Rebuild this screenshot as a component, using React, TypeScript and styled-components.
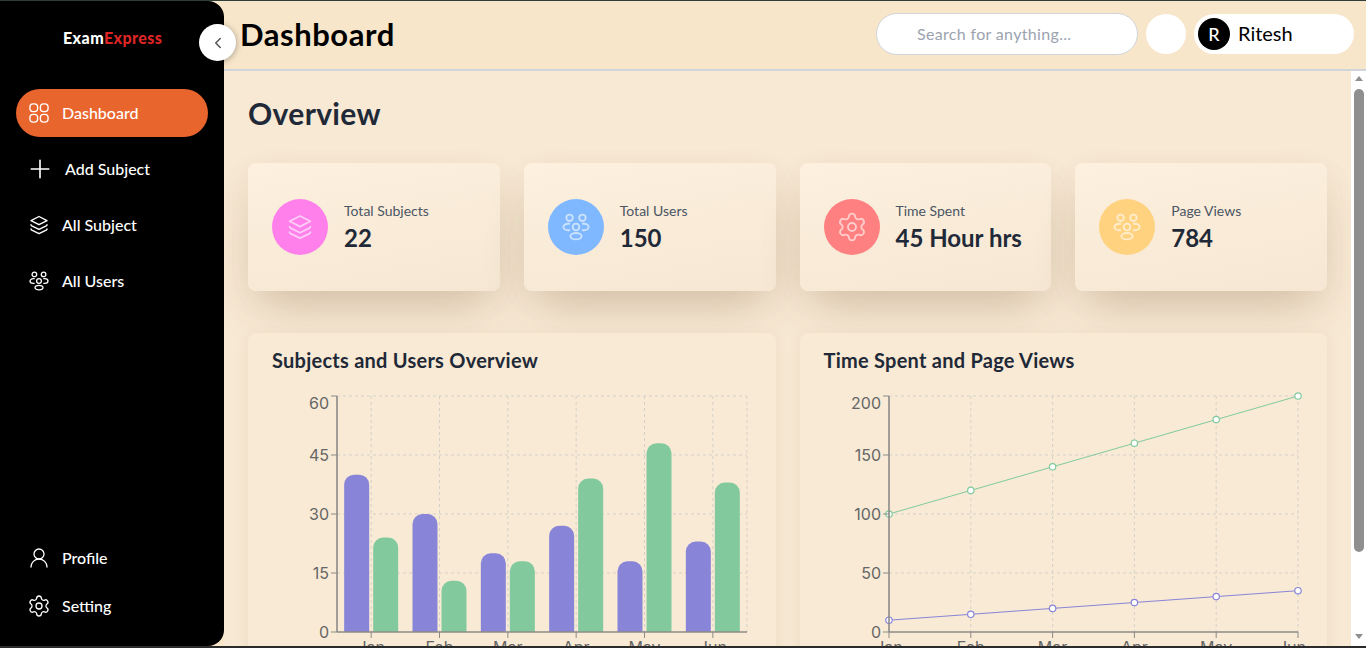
import React from "react";
import styled, { createGlobalStyle } from "styled-components";
import { ChevronLeft, Plus, Settings, UserRound } from "lucide-react";

const sans = `"Lato", "Noto Sans", sans-serif`;
const tickFont = `"Inter", "Noto Sans", sans-serif`;

const GridIcon = ({ size = 20 }: { size?: number }) => (
  <svg width={size} height={size} viewBox="0 0 22 22" fill="none" stroke="currentColor" strokeWidth="1.5">
    <rect x="1" y="1" width="8.5" height="8.5" rx="3.6" />
    <rect x="12.5" y="1" width="8.5" height="8.5" rx="3.6" />
    <rect x="1" y="12.5" width="8.5" height="8.5" rx="3.6" />
    <rect x="12.5" y="12.5" width="8.5" height="8.5" rx="3.6" />
  </svg>
);

const StackIcon = ({ size = 20 }: { size?: number }) => (
  <svg width={size} height={size} viewBox="0 0 20 20" fill="none" stroke="currentColor" strokeWidth="1.4" strokeLinejoin="round" strokeLinecap="round">
    <path d="M10 1.5 18 5.6 10 9.7 2 5.6Z" />
    <path d="M2 9.8c0 .5.3.8.8 1.1L10 14.4l7.2-3.5c.5-.3.8-.6.8-1.1" />
    <path d="M2 14c0 .5.3.8.8 1.1L10 18.6l7.2-3.5c.5-.3.8-.6.8-1.1" />
  </svg>
);

const GroupIcon = ({ size = 20 }: { size?: number }) => (
  <svg width={size} height={size} viewBox="0 0 20 20" fill="none" stroke="currentColor" strokeWidth="1.3" strokeLinecap="round">
    <circle cx="5.4" cy="3.4" r="2.3" />
    <circle cx="14.6" cy="3.4" r="2.3" />
    <circle cx="10" cy="10" r="2.4" />
    <ellipse cx="10" cy="16.6" rx="4" ry="2.3" />
    <path d="M5.2 7.7H4.2C2.4 7.7 1 8.8 1 10s1.400 2.300 3.200 2.300h1" />
    <path d="M14.800 7.700h1C17.600 7.700 19 8.800 19 10s-1.400 2.300-3.200 2.300h-1" />
  </svg>
);

const navTop = [
  { label: "Dashboard", icon: <GridIcon />, active: true },
  { label: "Add Subject", icon: <Plus size={30} strokeWidth={1.3} />, wide: true },
  { label: "All Subject", icon: <StackIcon /> },
  { label: "All Users", icon: <GroupIcon /> },
];

const stats = [
  { label: "Total Subjects", value: "22", color: "#ff80eb", icon: <StackIcon size={26} /> },
  { label: "Total Users", value: "150", color: "#80b8ff", icon: <GroupIcon size={28} /> },
  { label: "Time Spent", value: "45 Hour hrs", color: "#ff8080", icon: <Settings size={32} strokeWidth={1.4} /> },
  { label: "Page Views", value: "784", color: "#ffd280", icon: <GroupIcon size={28} /> },
];

const months = ["Jan", "Feb", "Mar", "Apr", "May", "Jun"];
const subjects = [40, 30, 20, 27, 18, 23];
const users = [24, 13, 18, 39, 48, 38];
const hours = [100, 120, 140, 160, 180, 200];
const views = [10, 15, 20, 25, 30, 35];

const GRID = "#d4d1ca";
const AXIS = "#8c8a86";
const TICK = "#666666";
const PURPLE = "#8884d8";
const GREEN = "#82ca9d";

const chartTop = 7;
const chartBottom = 243;
const chartHeight = chartBottom - chartTop;

// axes, ticks and dashed grid shared by both charts
const ChartFrame = ({
  left,
  right,
  yTicks,
  xs,
  xLines,
  labelShift = 0,
  children,
}: {
  left: number;
  right: number;
  yTicks: number[];
  xs: number[];
  xLines: number[];
  labelShift?: number;
  children: React.ReactNode;
}) => {
  const max = yTicks[yTicks.length - 1];
  const yOf = (v: number) => chartBottom - (v / max) * chartHeight;
  return (
    <svg width="100%" height="280" style={{ display: "block", overflow: "visible" }}>
      <g stroke={GRID} strokeDasharray="3 3">
        {yTicks.slice(1).map((t) => (
          <line key={t} x1={left} x2={right} y1={yOf(t)} y2={yOf(t)} />
        ))}
        {xLines.map((x) => (
          <line key={x} x1={x} x2={x} y1={chartTop} y2={chartBottom} />
        ))}
      </g>
      {children}
      <g stroke={AXIS}>
        <line x1={left} x2={left} y1={chartTop} y2={chartBottom} strokeWidth="1.6" />
        <line x1={left} x2={right} y1={chartBottom} y2={chartBottom} strokeWidth="1.6" />
        {yTicks.map((t) => (
          <line key={t} x1={left - 6} x2={left} y1={yOf(t)} y2={yOf(t)} />
        ))}
        {xs.map((x) => (
          <line key={x} x1={x} x2={x} y1={chartBottom} y2={chartBottom + 6} />
        ))}
      </g>
      <g fill={TICK} fontFamily={tickFont} fontSize="16">
        {yTicks.map((t) => (
          <text key={t} x={left - 8} y={yOf(t) + (t === max ? 13 : 6)} textAnchor="end">
            {t}
          </text>
        ))}
        {xs.map((x, i) => (
          <text key={x} x={i === 5 ? x - labelShift : x} y={chartBottom + 21} textAnchor="middle">
            {months[i]}
          </text>
        ))}
      </g>
    </svg>
  );
};

const BarsChart = () => {
  const left = 65;
  const right = 475;
  const band = (right - left) / 6;
  const xs = months.map((_, i) => left + band * (i + 0.5));
  const h = (v: number) => (v / 60) * chartHeight;
  const bar = (x: number, v: number, fill: string) => {
    const y = chartBottom - h(v);
    const w = 25;
    const r = 10;
    return (
      <path
        key={`${x}-${v}`}
        fill={fill}
        d={`M${x} ${chartBottom}V${y + r}A${r} ${r} 0 0 1 ${x + r} ${y}H${x + w - r}A${r} ${r} 0 0 1 ${x + w} ${y + r}V${chartBottom}Z`}
      />
    );
  };
  return (
    <ChartFrame left={left} right={right} yTicks={[0, 15, 30, 45, 60]} xs={xs} xLines={[...xs, right]}>
      {months.map((_, i) => (
        <g key={i}>
          {bar(xs[i] - 27, subjects[i], PURPLE)}
          {bar(xs[i] + 2, users[i], GREEN)}
        </g>
      ))}
    </ChartFrame>
  );
};

const LinesChart = () => {
  const left = 65;
  const right = 474;
  const step = (right - left) / 5;
  const xs = months.map((_, i) => left + step * i);
  const yOf = (v: number) => chartBottom - (v / 200) * chartHeight;
  const line = (data: number[], color: string) => (
    <g>
      <polyline fill="none" stroke={color} points={data.map((v, i) => `${xs[i]},${yOf(v)}`).join(" ")} />
      {data.map((v, i) => (
        <circle key={i} cx={xs[i]} cy={yOf(v)} r="3.2" fill="#fff" stroke={color} strokeWidth="1.2" />
      ))}
    </g>
  );
  return (
    <ChartFrame left={left} right={right} yTicks={[0, 50, 100, 150, 200]} xs={xs} xLines={xs.slice(1)} labelShift={6}>
      {line(hours, GREEN)}
      {line(views, PURPLE)}
    </ChartFrame>
  );
};

const App = () => (
  <>
    <GlobalStyle />
    <Frame>
      <Sidebar>
        <Logo>
          Exam<span>Express</span>
        </Logo>
        <CollapseButton>
          <ChevronLeft size={18} strokeWidth={2} />
        </CollapseButton>
        <Nav>
          {navTop.map((item) => (
            <NavItem key={item.label} $active={item.active} $wide={item.wide}>
              <NavIcon $wide={item.wide}>{item.icon}</NavIcon>
              {item.label}
            </NavItem>
          ))}
        </Nav>
        <BottomNav>
          <NavItem>
            <NavIcon>
              <UserRound size={24} strokeWidth={1.3} />
            </NavIcon>
            Profile
          </NavItem>
          <NavItem>
            <NavIcon>
              <Settings size={24} strokeWidth={1.3} />
            </NavIcon>
            Setting
          </NavItem>
        </BottomNav>
      </Sidebar>
      <Column>
        <Header>
          <PageTitle>Dashboard</PageTitle>
          <HeaderRight>
            <SearchBox placeholder="Search for anything..." readOnly />
            <RoundButton />
            <UserChip>
              <Avatar>R</Avatar>
              <UserName>Ritesh</UserName>
            </UserChip>
          </HeaderRight>
        </Header>
        <Body>
          <Main>
            <Heading>Overview</Heading>
            <StatsGrid>
              {stats.map((s) => (
                <StatCard key={s.label}>
                  <StatIcon $color={s.color}>{s.icon}</StatIcon>
                  <StatText>
                    <StatLabel>{s.label}</StatLabel>
                    <StatValue>{s.value}</StatValue>
                  </StatText>
                </StatCard>
              ))}
            </StatsGrid>
            <ChartsGrid>
              <ChartCard>
                <ChartTitle>Subjects and Users Overview</ChartTitle>
                <BarsChart />
              </ChartCard>
              <ChartCard>
                <ChartTitle>Time Spent and Page Views</ChartTitle>
                <LinesChart />
              </ChartCard>
            </ChartsGrid>
          </Main>
          <ScrollTrack>
            <ScrollArrow $dir="up" />
            <ScrollThumb />
            <ScrollArrow $dir="down" />
          </ScrollTrack>
        </Body>
      </Column>
    </Frame>
  </>
);

export default App;

const GlobalStyle = createGlobalStyle`
  * {
    box-sizing: border-box;
  }
  html, body {
    margin: 0;
    height: 100%;
    overflow: hidden;
    font-family: ${sans};
  }
`;

const Frame = styled.div`
  display: flex;
  height: 648px;
  border-top: 1px solid #2f3e3a;
  border-bottom: 2px solid #2b2b2b;
  background: #f7e6ca;
`;

const Sidebar = styled.aside`
  position: relative;
  flex: 0 0 224px;
  display: flex;
  flex-direction: column;
  background: #000;
  border-radius: 0 16px 16px 0;
  z-index: 2;
`;

const Logo = styled.div`
  margin: 27px 0 0;
  padding-left: 63px;
  font-size: 16px;
  line-height: 19px;
  font-weight: 900;
  letter-spacing: 0.42px;
  color: #fff;

  span {
    color: #dc2626;
  }
`;

const CollapseButton = styled.button`
  position: absolute;
  top: 23px;
  right: -12px;
  width: 37px;
  height: 37px;
  display: flex;
  align-items: center;
  justify-content: center;
  padding: 0;
  border: none;
  border-radius: 50%;
  background: #fff;
  color: #555;
  box-shadow: 0 1px 6px rgba(0, 0, 0, 0.35);
`;

const Nav = styled.nav`
  display: flex;
  flex-direction: column;
  gap: 8px;
  margin-top: 42px;
  padding: 0 16px;
`;

const BottomNav = styled.nav`
  display: flex;
  flex-direction: column;
  margin-top: auto;
  padding: 0 16px 16px;
`;

const NavItem = styled.a<{ $active?: boolean; $wide?: boolean }>`
  display: flex;
  align-items: center;
  gap: ${(p) => (p.$wide ? "14px" : "12px")};
  height: 48px;
  padding: 0 0 1px 12px;
  border-radius: 24px;
  background: ${(p) => (p.$active ? "#e9652e" : "transparent")};
  color: #fff;
  font-size: 16px;
  font-weight: 500;
`;

const NavIcon = styled.span<{ $wide?: boolean }>`
  display: flex;
  align-items: center;
  justify-content: center;
  width: 22px;
  flex: none;
  margin: ${(p) => (p.$wide ? "1px 0 0 1px" : "1px 0 0")};

  svg {
    flex: none;
  }
`;

const Column = styled.div`
  flex: 1;
  min-width: 0;
  display: flex;
  flex-direction: column;
`;

const Header = styled.header`
  flex: 0 0 70px;
  display: flex;
  align-items: center;
  justify-content: space-between;
  padding: 0 12px 2px 16px;
  background: #f7e6ca;
  border-bottom: 2px solid #d1d5db;
`;

const PageTitle = styled.h1`
  margin: 0;
  font-size: 31px;
  letter-spacing: 0.55px;
  font-weight: 700;
  color: #000;
`;

const HeaderRight = styled.div`
  display: flex;
  align-items: center;
  gap: 8px;
`;

const SearchBox = styled.input`
  width: 262px;
  height: 42px;
  padding: 0 16px 2px 40px;
  border: 1px solid #d1d5db;
  border-radius: 21px;
  background: #fff;
  font-family: ${sans};
  font-size: 16px;
  letter-spacing: 0.33px;
  outline: none;

  &::placeholder {
    color: #9ca3af;
  }
`;

const RoundButton = styled.div`
  width: 40px;
  height: 40px;
  border-radius: 50%;
  background: #fff;
`;

const UserChip = styled.div`
  display: flex;
  align-items: center;
  gap: 8px;
  width: 160px;
  height: 40px;
  padding-left: 4px;
  border-radius: 20px;
  background: #fff;
  color: #000;
  font-size: 20px;
`;

const UserName = styled.span`
  padding-bottom: 3px;
`;

const Avatar = styled.span`
  width: 32px;
  height: 32px;
  display: flex;
  align-items: center;
  justify-content: center;
  border-radius: 50%;
  background: #000;
  color: #fff;
  font-size: 18px;
  font-weight: 500;
`;

const Body = styled.div`
  flex: 1;
  min-height: 0;
  display: flex;
`;

const Main = styled.main`
  flex: 1;
  min-width: 0;
  overflow: hidden;
  padding: 24px;
  background: #f8e9d4;
`;

const ScrollTrack = styled.div`
  flex: 0 0 15px;
  display: flex;
  flex-direction: column;
  align-items: center;
  padding: 5px 0 7px;
  background: #fff;
`;

const ScrollArrow = styled.div<{ $dir: "up" | "down" }>`
  flex: none;
  width: 0;
  height: 0;
  margin-top: ${(p) => (p.$dir === "down" ? "auto" : "0")};
  border-left: 4.5px solid transparent;
  border-right: 4.5px solid transparent;
  border-bottom: ${(p) => (p.$dir === "up" ? "5px solid #8f8f8f" : "none")};
  border-top: ${(p) => (p.$dir === "down" ? "5px solid #8f8f8f" : "none")};
`;

const ScrollThumb = styled.div`
  flex: none;
  width: 10px;
  height: 463px;
  margin-top: 8px;
  border-radius: 5px;
  background: #8f8f8f;
`;

const Heading = styled.h2`
  margin: 0 0 32px;
  font-size: 30px;
  line-height: 36px;
  letter-spacing: 0.35px;
  font-weight: 700;
  color: #1f2937;
`;

const StatsGrid = styled.div`
  display: grid;
  grid-template-columns: repeat(4, 1fr);
  gap: 24px;
  margin-bottom: 42px;
`;

const StatCard = styled.div`
  display: flex;
  align-items: center;
  gap: 16px;
  height: 128px;
  padding: 0 24px;
  border-radius: 8px;
  background: linear-gradient(170deg, #fdf0de 0%, #f5e7d3 100%);
  box-shadow: 0 25px 50px -12px rgba(90, 60, 20, 0.22), 0 8px 32px rgba(90, 60, 20, 0.05);
`;

const StatIcon = styled.div<{ $color: string }>`
  flex: none;
  width: 56px;
  height: 56px;
  display: flex;
  align-items: center;
  justify-content: center;
  border-radius: 50%;
  background: ${(p) => p.$color};
  color: rgba(255, 255, 255, 0.6);
`;

const StatText = styled.div`
  padding-top: 2px;
`;

const StatLabel = styled.div`
  font-size: 14px;
  line-height: 20px;
  color: #4b5563;
`;

const StatValue = styled.div`
  font-size: 24px;
  line-height: 34px;
  font-weight: 700;
  color: #1f2937;
`;

const ChartsGrid = styled.div`
  display: grid;
  grid-template-columns: repeat(2, 1fr);
  gap: 24px;
`;

const ChartCard = styled.section`
  padding: 13px 24px 24px;
  border-radius: 8px;
  background: #f8ead5;
  box-shadow: 0 4px 16px rgba(90, 60, 20, 0.08);
`;

const ChartTitle = styled.h3`
  margin: 0 0 15px;
  font-size: 20px;
  line-height: 28px;
  letter-spacing: 0.25px;
  font-weight: 700;
  color: #1f2937;
`;
